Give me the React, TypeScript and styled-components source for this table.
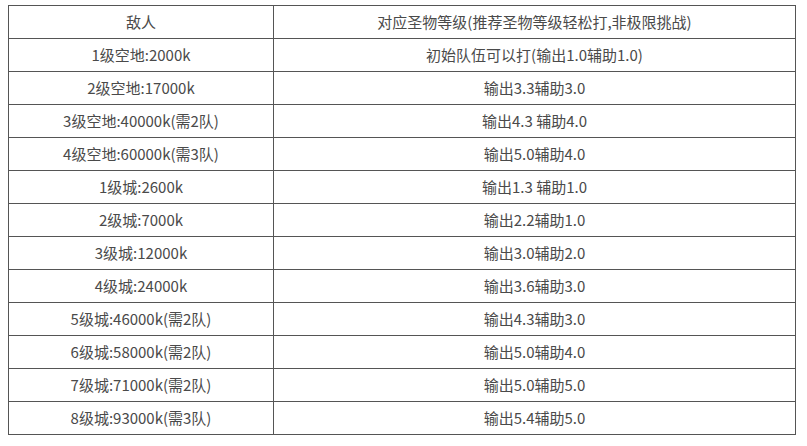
import React from "react";
import styled, { createGlobalStyle } from "styled-components";

const Global = createGlobalStyle`
  html, body { margin: 0; padding: 0; background: #fff; }
  body { font-family: "Microsoft YaHei", "Noto Sans CJK SC", "Noto Sans", sans-serif; }
`;

const Page = styled.div`
  padding: 5px 0 0 8px;
`;

const Table = styled.table`
  border-collapse: collapse;
  width: 788px;
  table-layout: fixed;
  font-size: 15px;
  color: #4a4a4a;
`;

const Cell = styled.td<{ $w?: number }>`
  border: 1px solid #555;
  height: 32px;
  padding: 0;
  text-align: center;
  vertical-align: middle;
  line-height: 20px;
  ${(p) => (p.$w ? `width: ${p.$w}px;` : "")}
`;

const rows: [string, string][] = [
  ["敌人", "对应圣物等级(推荐圣物等级轻松打,非极限挑战)"],
  ["1级空地:2000k", "初始队伍可以打(输出1.0辅助1.0)"],
  ["2级空地:17000k", "输出3.3辅助3.0"],
  ["3级空地:40000k(需2队)", "输出4.3 辅助4.0"],
  ["4级空地:60000k(需3队)", "输出5.0辅助4.0"],
  ["1级城:2600k", "输出1.3 辅助1.0"],
  ["2级城:7000k", "输出2.2辅助1.0"],
  ["3级城:12000k", "输出3.0辅助2.0"],
  ["4级城:24000k", "输出3.6辅助3.0"],
  ["5级城:46000k(需2队)", "输出4.3辅助3.0"],
  ["6级城:58000k(需2队)", "输出5.0辅助4.0"],
  ["7级城:71000k(需2队)", "输出5.0辅助5.0"],
  ["8级城:93000k(需3队)", "输出5.4辅助5.0"],
];

export default function App() {
  return (
    <Page>
      <Global />
      <Table>
        <tbody>
          {rows.map(([a, b], i) => (
            <tr key={i}>
              <Cell $w={i === 0 ? 264 : undefined}>{a}</Cell>
              <Cell>{b}</Cell>
            </tr>
          ))}
        </tbody>
      </Table>
    </Page>
  );
}
